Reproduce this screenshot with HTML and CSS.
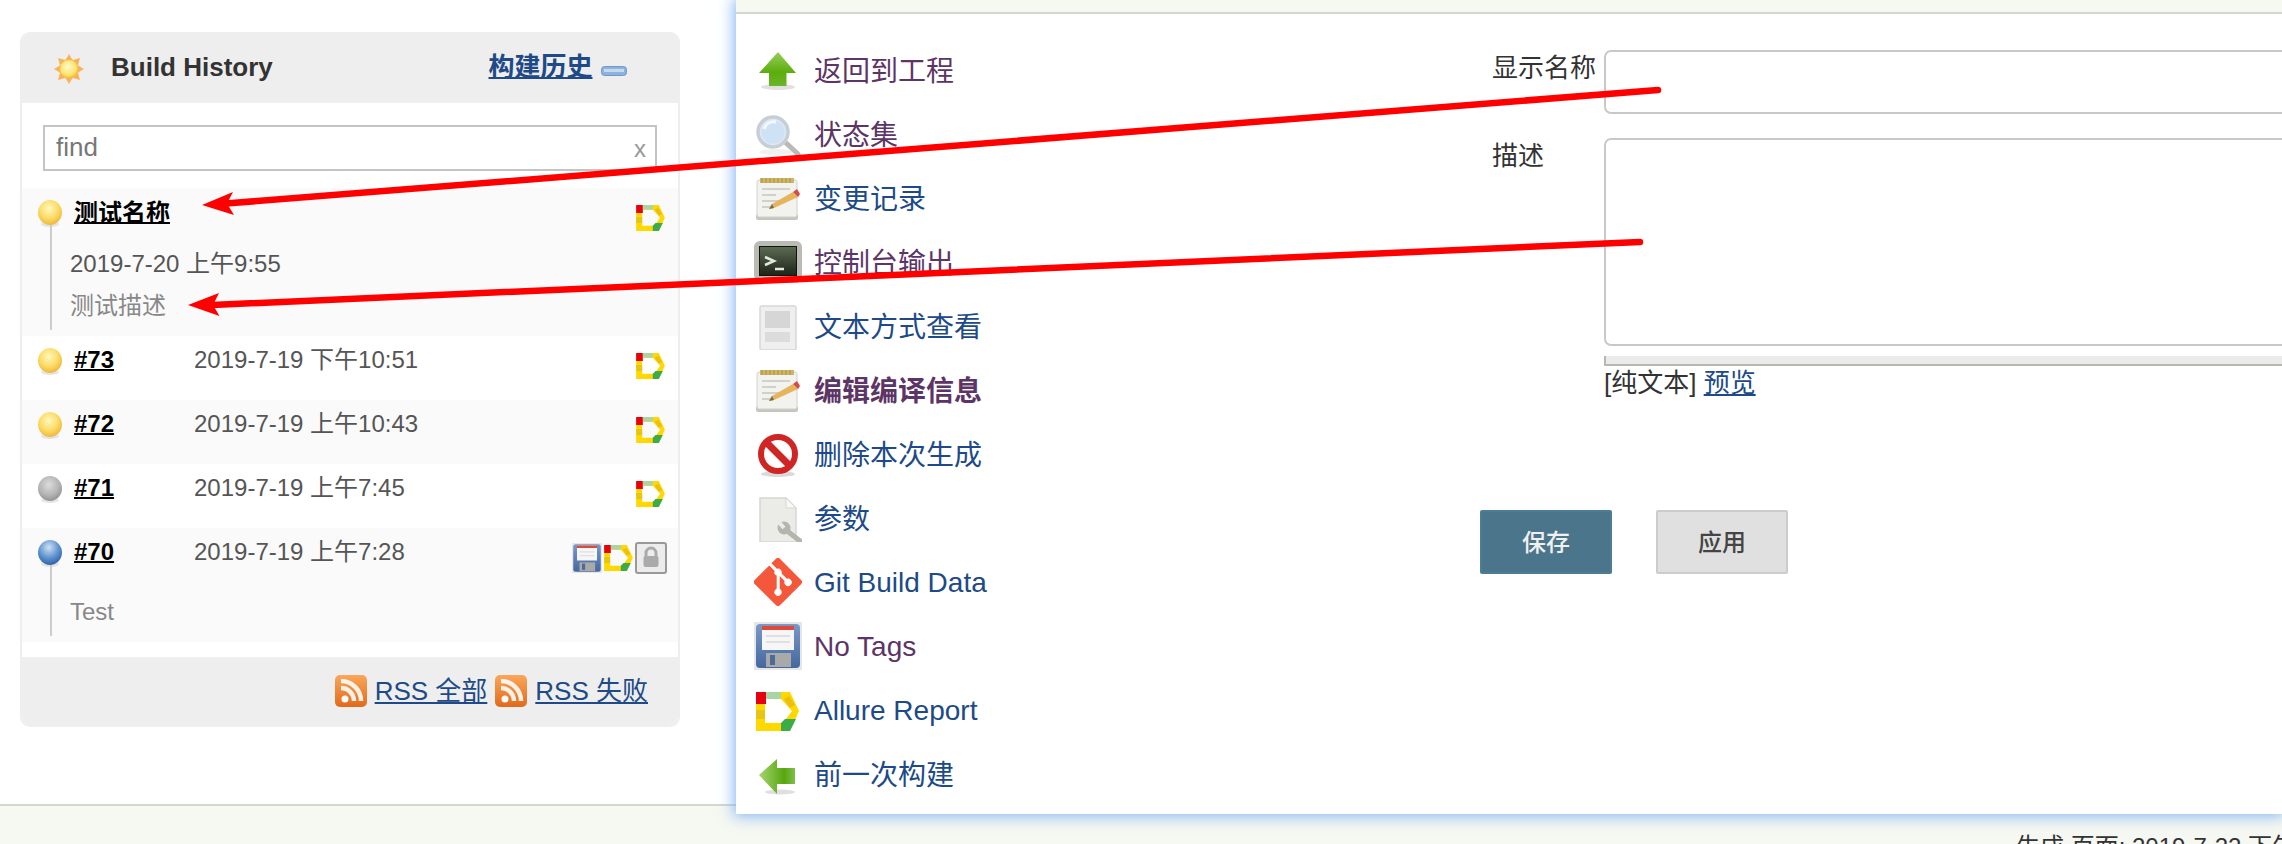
FILE: index.html
```html
<!DOCTYPE html>
<html lang="zh-CN">
<head>
<meta charset="utf-8">
<title>Build History</title>
<link rel="stylesheet" href="styles.css">
</head>
<body>
<svg class="sprite" width="0" height="0" aria-hidden="true">
  <defs>
    <radialGradient id="g-yellow" cx="45%" cy="35%" r="70%"><stop offset="0" stop-color="#fff7c0"/><stop offset=".55" stop-color="#fbdc66"/><stop offset="1" stop-color="#efb035"/></radialGradient>
    <radialGradient id="g-grey" cx="45%" cy="35%" r="70%"><stop offset="0" stop-color="#dcdcdc"/><stop offset=".6" stop-color="#b4b4b4"/><stop offset="1" stop-color="#8c8c8c"/></radialGradient>
    <radialGradient id="g-blue" cx="45%" cy="30%" r="75%"><stop offset="0" stop-color="#cfe0f3"/><stop offset=".55" stop-color="#5f94cf"/><stop offset="1" stop-color="#2a5a9e"/></radialGradient>
    <radialGradient id="g-sun" cx="45%" cy="40%" r="60%"><stop offset="0" stop-color="#fffbd0"/><stop offset=".7" stop-color="#fde26a"/><stop offset="1" stop-color="#f6b93b"/></radialGradient>
    <linearGradient id="g-green" x1="0" y1="0" x2="0" y2="1"><stop offset="0" stop-color="#97cf5a"/><stop offset=".6" stop-color="#5cad0c"/><stop offset="1" stop-color="#6ab52a"/></linearGradient>
    <linearGradient id="g-green2" x1="0" y1="0" x2="1" y2="0"><stop offset="0" stop-color="#a5d470"/><stop offset=".7" stop-color="#58a60e"/><stop offset="1" stop-color="#7fbe4c"/></linearGradient>
    <linearGradient id="g-rss" x1="0" y1="0" x2="0" y2="1"><stop offset="0" stop-color="#f9a75a"/><stop offset="1" stop-color="#e2691b"/></linearGradient>
    <linearGradient id="g-term" x1="0" y1="0" x2="0" y2="1"><stop offset="0" stop-color="#5b6a52"/><stop offset="1" stop-color="#1e2419"/></linearGradient>
    <linearGradient id="g-flop" x1="0" y1="0" x2="0" y2="1"><stop offset="0" stop-color="#7a99c8"/><stop offset="1" stop-color="#44679f"/></linearGradient>
    <symbol id="ball-yellow" viewBox="0 0 24 27"><ellipse cx="12" cy="24" rx="9" ry="3" fill="#ccc" opacity=".5"/><ellipse cx="12" cy="12.5" rx="12" ry="12.5" fill="url(#g-yellow)"/></symbol>
    <symbol id="ball-grey" viewBox="0 0 24 27"><ellipse cx="12" cy="24" rx="9" ry="3" fill="#ccc" opacity=".5"/><ellipse cx="12" cy="12.5" rx="12" ry="12.5" fill="url(#g-grey)"/></symbol>
    <symbol id="ball-blue" viewBox="0 0 24 27"><ellipse cx="12" cy="24" rx="9" ry="3" fill="#ccc" opacity=".5"/><ellipse cx="12" cy="12.5" rx="12" ry="12.5" fill="url(#g-blue)"/></symbol>
    <symbol id="i-sun" viewBox="0 0 32 32"><g fill="#fbb15a"><path d="M16 1l3.5 6h-7z"/><path d="M16 31l3.5-6h-7z"/><path d="M1 16l6-3.5v7z"/><path d="M31 16l-6-3.5v7z"/><path d="M5 5l7 2-5 5z"/><path d="M27 5l-7 2 5 5z"/><path d="M5 27l7-2-5-5z"/><path d="M27 27l-7-2 5-5z"/></g><circle cx="16" cy="16" r="9.5" fill="url(#g-sun)" stroke="#f9b44a"/></symbol>
    <symbol id="i-minus" viewBox="0 0 26 10"><rect x=".5" y=".5" width="25" height="9" rx="3" fill="#8fb2dc" stroke="#6f98cb"/><rect x="3" y="3" width="20" height="3" fill="#c6d9ef"/></symbol>
    <symbol id="i-rss" viewBox="0 0 32 32"><rect width="32" height="32" rx="5" fill="url(#g-rss)"/><circle cx="10" cy="24" r="3.5" fill="#fff"/><path d="M6 13a13 13 0 0 1 13 13M6 6a20 20 0 0 1 20 20" fill="none" stroke="#fff" stroke-width="4.5" opacity=".88"/></symbol>
    <symbol id="i-up" viewBox="0 0 48 48"><ellipse cx="24" cy="41" rx="17" ry="3" fill="#bbb" opacity=".45"/><path d="M24 6L42 27H32.500V40H15V27H5z" fill="url(#g-green)"/></symbol>
    <symbol id="i-left" viewBox="0 0 48 48"><ellipse cx="26" cy="42" rx="15" ry="2.500" fill="#bbb" opacity=".45"/><path d="M5 25L23 9V18H41V34H23V44z" fill="url(#g-green2)"/></symbol>
    <symbol id="i-search" viewBox="0 0 48 48"><ellipse cx="22" cy="42" rx="17" ry="3" fill="#e2e2e2" opacity=".5"/><path d="M31 32L44 44" stroke="#b9b9b9" stroke-width="5" stroke-linecap="round"/><circle cx="19" cy="22" r="15" fill="#dbe8f6" stroke="#c9ced4" stroke-width="3.500"/><circle cx="19" cy="22" r="11.500" fill="#cfe1f5"/><path d="M10 19a10 10 0 0 1 12-7" fill="none" stroke="#f3f8fd" stroke-width="3"/></symbol>
    <symbol id="i-note" viewBox="0 0 48 48"><rect x="2" y="40" width="42" height="6" rx="2" fill="#c6c6c1"/><rect x="3" y="6" width="40" height="37" rx="2" fill="#f2f2ee" stroke="#d2d2cd"/><rect x="6" y="4" width="34" height="5" fill="#cdb564"/><path d="M8 4v5M12 4v5M16 4v5M20 4v5M24 4v5M28 4v5M32 4v5M36 4v5" stroke="#a8924a" stroke-width="1"/><path d="M8 15h28M8 21h14M8 27h22M8 33h10" stroke="#d0d0cc" stroke-width="2"/><path d="M15 35l3-5 21-12 5 5-24 11z" fill="#e6b45a"/><path d="M39 18l5 5 2-3-3-5z" fill="#d84a4a"/><path d="M15 35l3-5 2 4z" fill="#7a6a4a"/></symbol>
    <symbol id="i-term" viewBox="0 0 48 48"><rect y="3" width="48" height="40" rx="6" fill="#b9bbb4"/><rect x="5" y="8" width="38" height="30" fill="#10140d"/><rect x="6" y="9" width="36" height="28" fill="url(#g-term)"/><path d="M11 19l9 4-9 4" fill="none" stroke="#e4e8dc" stroke-width="2.500"/><path d="M21 31h9" stroke="#e4e8dc" stroke-width="2.500"/><rect x="4" y="42" width="40" height="3" fill="#aaa" opacity=".5"/></symbol>
    <symbol id="i-doc" viewBox="0 0 48 48"><rect x="6" y="4" width="36" height="44" rx="2" fill="#efefef" stroke="#d8d8d8" stroke-width="1.500"/><rect x="11" y="9" width="25" height="17" fill="#d6d6d6"/><rect x="11" y="30" width="25" height="10" fill="#dcdcdc"/></symbol>
    <symbol id="i-ban" viewBox="0 0 48 48"><ellipse cx="24" cy="44" rx="17" ry="3" fill="#aaa" opacity=".45"/><circle cx="24" cy="24" r="17" fill="#fff" stroke="#d02525" stroke-width="6"/><path d="M13 13L35 35" stroke="#d02525" stroke-width="7"/></symbol>
    <symbol id="i-param" viewBox="0 0 48 48"><path d="M6 4H32L42 14V48H6z" fill="#ebebe8" stroke="#d6d6d2" stroke-width="1.500"/><path d="M32 4V14H42z" fill="#f8f8f6" stroke="#d6d6d2"/><path d="M32 36L46 47" stroke="#b5b5ae" stroke-width="5" stroke-linecap="round"/><circle cx="30" cy="34" r="6.500" fill="#b5b5ae"/><path d="M24 27L30 34" stroke="#ebebe8" stroke-width="4"/></symbol>
    <symbol id="i-git" viewBox="0 0 92 92"><path fill="#f4573a" d="M90.156 41.965 50.036 1.848a5.918 5.918 0 0 0-8.372 0l-8.328 8.332 10.566 10.566a7.03 7.03 0 0 1 7.23 1.684 7.034 7.034 0 0 1 1.669 7.277l10.187 10.184a7.028 7.028 0 0 1 7.278 1.672 7.04 7.04 0 0 1 0 9.957 7.05 7.05 0 0 1-9.965 0 7.044 7.044 0 0 1-1.528-7.66l-9.5-9.497V59.36a7.04 7.04 0 0 1 1.86 11.29 7.04 7.04 0 0 1-9.957 0 7.04 7.04 0 0 1 0-9.958 7.06 7.06 0 0 1 2.304-1.539V33.926a7.049 7.049 0 0 1-3.82-9.234L29.242 14.272 1.73 41.777a5.925 5.925 0 0 0 0 8.371L41.852 90.27a5.925 5.925 0 0 0 8.37 0l39.934-39.934a5.925 5.925 0 0 0 0-8.371"/></symbol>
    <symbol id="i-floppy" viewBox="0 0 48 48"><rect width="48" height="48" fill="#e6e6e6"/><rect x="2" y="2" width="44" height="44" rx="4" fill="url(#g-flop)"/><rect x="8" y="4" width="32" height="24" fill="#f6f6f6"/><rect x="8" y="4" width="32" height="4" fill="#db4a3a"/><path d="M12 14h24M12 20h24" stroke="#e0e0e0" stroke-width="2"/><rect x="12" y="31" width="25" height="14" fill="#a9a9a9"/><rect x="16" y="33" width="5" height="10" fill="#4e6b96"/></symbol>
    <symbol id="i-allure" viewBox="0 0 43 39"><path fill-rule="evenodd" fill="#ffd800" d="M0 0H34L43 19 34 39H0zM9 7V31H27L36 19 25 7z"/><rect width="10" height="12" fill="#e60012"/><rect x="10" width="15" height="7" fill="#a9d5a5"/><rect y="18" width="9" height="9" fill="#e6c614"/><path d="M28 7L33 4 39 13 34 16z" fill="#eabf10"/><path d="M25 31L29 27 40 27 34 39H25z" fill="#3cac48"/></symbol>
    <symbol id="i-allure-task" viewBox="0 0 48 48"><use href="#i-allure" x="2" y="6" width="43" height="39"/></symbol>
    <symbol id="i-lock" viewBox="0 0 32 32"><rect x="1" y="1" width="30" height="30" rx="2" fill="#ececec" stroke="#999" stroke-width="2"/><path d="M11 15v-4a5 5 0 0 1 10 0v4" fill="none" stroke="#aaa" stroke-width="3"/><rect x="8.500" y="14" width="15" height="11" rx="2" fill="#aaa"/></symbol>
  </defs>
</svg>

<div class="page">
  <main class="page-main">
    <section class="panel">
      <header class="panel-head">
        <svg class="ico-sun"><use href="#i-sun"/></svg>
        <h2 class="panel-title">Build History</h2>
        <a class="panel-link" href="#">构建历史</a>
        <svg class="ico-minus"><use href="#i-minus"/></svg>
      </header>
      <div class="search">
        <input class="search-input" type="text" value="find">
        <span class="search-clear">x</span>
      </div>
      <div class="build odd">
        <div class="build-head">
          <svg class="ball"><use href="#ball-yellow"/></svg>
          <a class="build-name cjk" href="#">测试名称</a>
          <div class="build-icons"><svg class="ico-allure"><use href="#i-allure"/></svg></div>
        </div>
        <div class="build-extra">
          <div class="build-date">2019-7-20 上午9:55</div>
          <div class="build-desc spaced">测试描述</div>
        </div>
      </div>
      <div class="build">
        <div class="build-head">
          <svg class="ball"><use href="#ball-yellow"/></svg>
          <a class="build-name num" href="#">#73</a>
          <span class="build-date">2019-7-19 下午10:51</span>
          <div class="build-icons"><svg class="ico-allure"><use href="#i-allure"/></svg></div>
        </div>
      </div>
      <div class="build odd">
        <div class="build-head">
          <svg class="ball"><use href="#ball-yellow"/></svg>
          <a class="build-name num" href="#">#72</a>
          <span class="build-date">2019-7-19 上午10:43</span>
          <div class="build-icons"><svg class="ico-allure"><use href="#i-allure"/></svg></div>
        </div>
      </div>
      <div class="build">
        <div class="build-head">
          <svg class="ball"><use href="#ball-grey"/></svg>
          <a class="build-name num" href="#">#71</a>
          <span class="build-date">2019-7-19 上午7:45</span>
          <div class="build-icons"><svg class="ico-allure"><use href="#i-allure"/></svg></div>
        </div>
      </div>
      <div class="build odd">
        <div class="build-head">
          <svg class="ball"><use href="#ball-blue"/></svg>
          <a class="build-name num" href="#">#70</a>
          <span class="build-date">2019-7-19 上午7:28</span>
          <div class="build-icons tight">
            <svg class="ico-floppy"><use href="#i-floppy"/></svg>
            <svg class="ico-allure"><use href="#i-allure"/></svg>
            <svg class="ico-lock"><use href="#i-lock"/></svg>
          </div>
        </div>
        <div class="build-extra desc-only">
          <div class="build-desc">Test</div>
        </div>
      </div>
      <footer class="panel-foot">
        <svg class="ico-rss"><use href="#i-rss"/></svg>
        <a class="foot-link" href="#">RSS 全部</a>
        <svg class="ico-rss"><use href="#i-rss"/></svg>
        <a class="foot-link" href="#">RSS 失败</a>
      </footer>
    </section>
  </main>
  <footer class="page-foot">生成 页面: 2019-7-22 下午3:46:12</footer>
</div>

<section class="dialog">
  <div class="dialog-strip"></div>
  <div class="dialog-body">
    <nav class="tasks">
      <a class="task visited" href="#"><svg class="task-ico"><use href="#i-up"/></svg><span class="task-text">返回到工程</span></a>
      <a class="task visited" href="#"><svg class="task-ico"><use href="#i-search"/></svg><span class="task-text">状态集</span></a>
      <a class="task" href="#"><svg class="task-ico"><use href="#i-note"/></svg><span class="task-text">变更记录</span></a>
      <a class="task visited" href="#"><svg class="task-ico"><use href="#i-term"/></svg><span class="task-text">控制台输出</span></a>
      <a class="task" href="#"><svg class="task-ico"><use href="#i-doc"/></svg><span class="task-text">文本方式查看</span></a>
      <a class="task visited current" href="#"><svg class="task-ico"><use href="#i-note"/></svg><span class="task-text">编辑编译信息</span></a>
      <a class="task" href="#"><svg class="task-ico"><use href="#i-ban"/></svg><span class="task-text">删除本次生成</span></a>
      <a class="task" href="#"><svg class="task-ico"><use href="#i-param"/></svg><span class="task-text">参数</span></a>
      <a class="task latin" href="#"><svg class="task-ico"><use href="#i-git"/></svg><span class="task-text">Git Build Data</span></a>
      <a class="task latin visited" href="#"><svg class="task-ico"><use href="#i-floppy"/></svg><span class="task-text">No Tags</span></a>
      <a class="task latin" href="#"><svg class="task-ico"><use href="#i-allure-task"/></svg><span class="task-text">Allure Report</span></a>
      <a class="task" href="#"><svg class="task-ico"><use href="#i-left"/></svg><span class="task-text">前一次构建</span></a>
    </nav>
    <form class="form">
      <label class="form-label">显示名称</label>
      <input class="form-input" type="text">
      <label class="form-label">描述</label>
      <div class="form-field">
        <textarea class="form-area"></textarea>
        <div class="form-grip"></div>
        <div class="form-hint">[纯文本] <a class="form-preview" href="#">预览</a></div>
      </div>
      <div class="form-actions">
        <button class="btn btn-primary" type="button">保存</button>
        <button class="btn" type="button">应用</button>
      </div>
    </form>
  </div>
</section>

<svg class="arrows" width="2282" height="844" viewBox="0 0 2282 844" aria-hidden="true">
  <g fill="#f00" stroke="none">
    <path d="M202 205L233 192 227 203.500 234 215z"/>
    <path d="M188 305L219 293 213 305 219.500 316z"/>
  </g>
  <g fill="none" stroke="#f00" stroke-width="6.500" stroke-linecap="round">
    <path d="M1658 90L226 203.500"/>
    <path d="M1640 242L212 305"/>
  </g>
</svg>
</body>
</html>
```

FILE: styles.css
```css
* { box-sizing: border-box; }

html, body {
  margin: 0;
  width: 2282px;
  height: 844px;
  overflow: hidden;
  background: #fff;
  font-family: "Liberation Sans", "Noto Sans CJK SC", sans-serif;
  color: #333;
}

.sprite { display: block; }

.page {
  display: flex;
  flex-direction: column;
  height: 844px;
}

.page-main {
  flex: 1;
  padding: 32px 0 0 20px;
}

.page-foot {
  height: 40px;
  flex: none;
  padding: 26px 0 0 2016px;
  background: #f6f8f2;
  border-top: 2px solid #d3d7cf;
  font-size: 24px;
  line-height: 30px;
  color: #333;
  white-space: nowrap;
  overflow: hidden;
}

/* Build history panel */
.panel {
  width: 660px;
  height: 695px;
  display: flex;
  flex-direction: column;
  border: 2px solid #eee;
  border-radius: 10px;
  overflow: hidden;
  font-size: 24px;
  line-height: 32px;
}

.panel-head {
  display: flex;
  align-items: center;
  height: 69px;
  flex: none;
  padding: 0 0 4px 31px;
  background: #eee;
}

.ico-sun {
  width: 32px;
  height: 32px;
  margin-top: 4px;
}

.panel-title {
  margin: 0 0 0 26px;
  font-size: 26px;
  font-weight: bold;
  color: #333;
  line-height: 32px;
}

.panel-link {
  margin-left: auto;
  font-size: 26px;
  font-weight: bold;
  color: #204a87;
  text-decoration-thickness: 2px;
}

.ico-minus {
  width: 26px;
  height: 10px;
  margin: 8px 51px 0 8.500px;
}

.search {
  position: relative;
  height: 85px;
  flex: none;
  padding: 22px 21px 17px 21px;
}

.search-input {
  display: block;
  width: 100%;
  height: 46px;
  padding: 0 0 2px 11px;
  border: 2px solid #c4c4c4;
  border-radius: 0;
  outline: none;
  font: 26px "Liberation Sans", "Noto Sans CJK SC", sans-serif;
  color: #777;
}

.search-clear {
  position: absolute;
  top: 30px;
  right: 32px;
  font-size: 24px;
  line-height: 32px;
  color: #999;
}

.build {
  flex: none;
  min-height: 64px;
}

.build.odd { background: #fafafa; }

.build-head {
  display: flex;
  align-items: flex-start;
  height: 37px;
  padding: 8px 13px 0 16px;
}

.ball {
  flex: none;
  width: 24px;
  height: 27px;
  margin-top: 4px;
}

.build-name {
  margin-left: 12px;
  font-weight: bold;
  color: #000;
  text-decoration-thickness: 2px;
}

.build-name.cjk { margin-top: 1px; }

.build-name.num { width: 120px; }

.build-date { color: #555; }

.build-icons {
  display: flex;
  margin-left: auto;
  margin-top: 9px;
}

.build-icons.tight {
  margin-top: 6px;
  margin-right: -2px;
  align-items: center;
}

.ico-allure { display: block; width: 29px; height: 26px; }
.ico-floppy { display: block; width: 30px; height: 30px; margin-right: 2px; }
.ico-lock { display: block; width: 32px; height: 32px; margin-left: 2px; }

.build-extra {
  margin: 0 0 6px 28px;
  padding: 23px 0 8px 18px;
  border-left: 2px solid #ccc;
}

.build-extra.desc-only { padding: 31px 0 8px 18px; }

.build-desc { color: #888; }
.build-desc.spaced { margin-top: 10px; }

.panel-foot {
  display: flex;
  align-items: center;
  justify-content: flex-end;
  gap: 8px;
  height: 68px;
  flex: none;
  margin-top: auto;
  padding-right: 30px;
  background: #eee;
}

.ico-rss { width: 32px; height: 32px; flex: none; }

.foot-link {
  font-size: 26px;
  color: #204a87;
}

/* Overlaid window */
.dialog {
  position: absolute;
  top: 0;
  left: 736px;
  width: 1546px;
  height: 814px;
  display: flex;
  flex-direction: column;
  overflow: hidden;
  background: #fff;
  box-shadow: 0 0 14px 2px rgba(110, 170, 245, 0.85);
}

.dialog-strip {
  height: 14px;
  flex: none;
  background: #f6f8f2;
  border-bottom: 2px solid #d3d7cf;
}

.dialog-body {
  display: flex;
  flex: 1;
}

.tasks {
  flex: none;
  width: 744px;
  padding: 24px 0 0 18px;
}

.task {
  display: flex;
  align-items: center;
  gap: 12px;
  height: 64px;
  font-size: 28px;
  color: #204a87;
  text-decoration: none;
}

.task.visited { color: #5c3566; }
.task.current { font-weight: bold; }

.task-text { margin-bottom: 2px; }

.task.latin .task-text {
  margin-top: 2px;
  margin-bottom: 0;
}

.task-ico {
  width: 48px;
  height: 48px;
  flex: none;
}

.form {
  flex: none;
  width: 1000px;
  padding-top: 36px;
  display: grid;
  grid-template-columns: 124px 1fr;
  grid-auto-rows: min-content;
  row-gap: 24px;
  font-size: 26px;
  line-height: 34px;
}

.form-label {
  padding: 1px 0 0 12px;
  color: #333;
}

.form-input {
  display: block;
  width: 100%;
  height: 64px;
  border: 2px solid #c8c8c8;
  border-radius: 7px;
  outline: none;
}

.form-field { min-width: 0; }

.form-area {
  display: block;
  width: 100%;
  height: 208px;
  border: 2px solid #c8c8c8;
  border-radius: 7px;
  outline: none;
  resize: none;
}

.form-grip {
  height: 10px;
  margin-top: 10px;
  background: #ebebeb;
  border-left: 2px solid #b8b8b0;
  border-bottom: 2px solid #b8b8b0;
}

.form-hint { color: #333; }

.form-preview { color: #204a87; }

.form-actions {
  grid-column: 1 / -1;
  display: flex;
  gap: 44px;
  margin-top: 86px;
}

.btn {
  width: 132px;
  height: 64px;
  padding: 0 0 3px;
  background: #e0e0e0;
  border: 2px solid #ccc;
  border-radius: 2px;
  font: 500 24px "Noto Sans CJK SC", sans-serif;
  color: #444;
}

.btn-primary {
  background: #4b758b;
  border-color: #4d7d96;
  color: #f0f0f0;
}

.arrows {
  position: absolute;
  top: 0;
  left: 0;
  pointer-events: none;
}
```
